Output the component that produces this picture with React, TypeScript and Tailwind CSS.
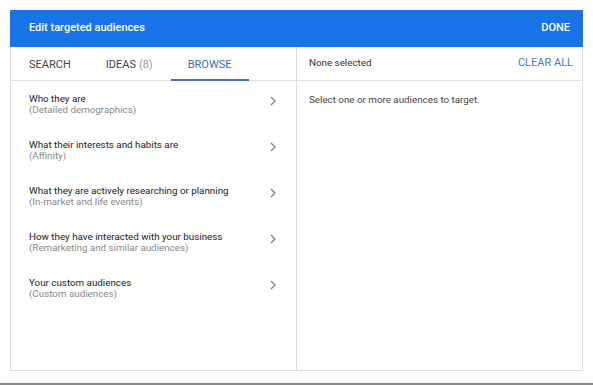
import React from "react";

const items = [
  ["Who they are", "(Detailed demographics)"],
  ["What their interests and habits are", "(Affinity)"],
  ["What they are actively researching or planning", "(In-market and life events)"],
  ["How they have interacted with your business", "(Remarketing and similar audiences)"],
  ["Your custom audiences", "(Custom audiences)"],
];

function Chevron() {
  return (
    <svg width="8" height="10" viewBox="0 0 8 10" className="shrink-0">
      <path d="M2 1 L6 5 L2 9" fill="none" stroke="#7a7a7a" strokeWidth="1.2" />
    </svg>
  );
}

export default function App() {
  return (
    <div className="w-[593px] h-[385px] bg-white relative font-['Roboto',sans-serif] overflow-hidden">
      <div className="pt-[10px] pl-[10px]">
        <div className="w-[573px] h-[361px] border border-[#dcdcdc] border-t-0 flex flex-col">
          <div className="h-[37px] bg-[#1a73e8] -mx-px flex items-center justify-between pl-[19px] pr-[13px] text-white text-[11px] font-medium">
            <span>Edit targeted audiences</span>
            <span>DONE</span>
          </div>
          <div className="flex flex-1">
            <div className="w-[286px] border-r border-[#dcdcdc] flex flex-col">
              <div className="h-[34px] border-b border-[#e0e0e0] flex text-[11px] text-[#444]">
                <div className="px-[18px] pt-[3px] flex items-center">SEARCH</div>
                <div className="pl-[17px] pr-[18px] pt-[3px] flex items-center">
                  IDEAS<span className="text-[#999] ml-[3px]">(8)</span>
                </div>
                <div className="pl-[17px] pr-[18px] flex items-center text-[#3d6db0] border-b-2 border-[#4a6f9e] pt-[4px] -mb-px">
                  BROWSE
                </div>
              </div>
              <div className="pt-[13px] flex flex-col">
                {items.map(([t, s]) => (
                  <div key={t} className="h-[46px] flex items-start pl-[18px] pr-[18px]">
                    <div className="flex-1 text-[9.8px] leading-[10px]">
                      <div className="text-[#222]">{t}</div>
                      <div className="text-[#8a8a8a] mt-px">{s}</div>
                    </div>
                    <div className="pt-[2px] pr-[1px]">
                      <Chevron />
                    </div>
                  </div>
                ))}
              </div>
            </div>
            <div className="flex-1 flex flex-col">
              <div className="h-[34px] border-b border-[#e0e0e0] flex items-center justify-between pl-[12px] pr-[9px]">
                <span className="text-[9.8px] text-[#333]">None selected</span>
                <span className="text-[11px] text-[#4a7cc0]">CLEAR ALL</span>
              </div>
              <div className="pl-[12px] pt-[12px] text-[9.8px] text-[#444]">
                Select one or more audiences to target.
              </div>
            </div>
          </div>
        </div>
      </div>
      <div className="absolute left-0 right-0 top-[383px] h-[2px] bg-[#8a8a8a]" />
    </div>
  );
}
